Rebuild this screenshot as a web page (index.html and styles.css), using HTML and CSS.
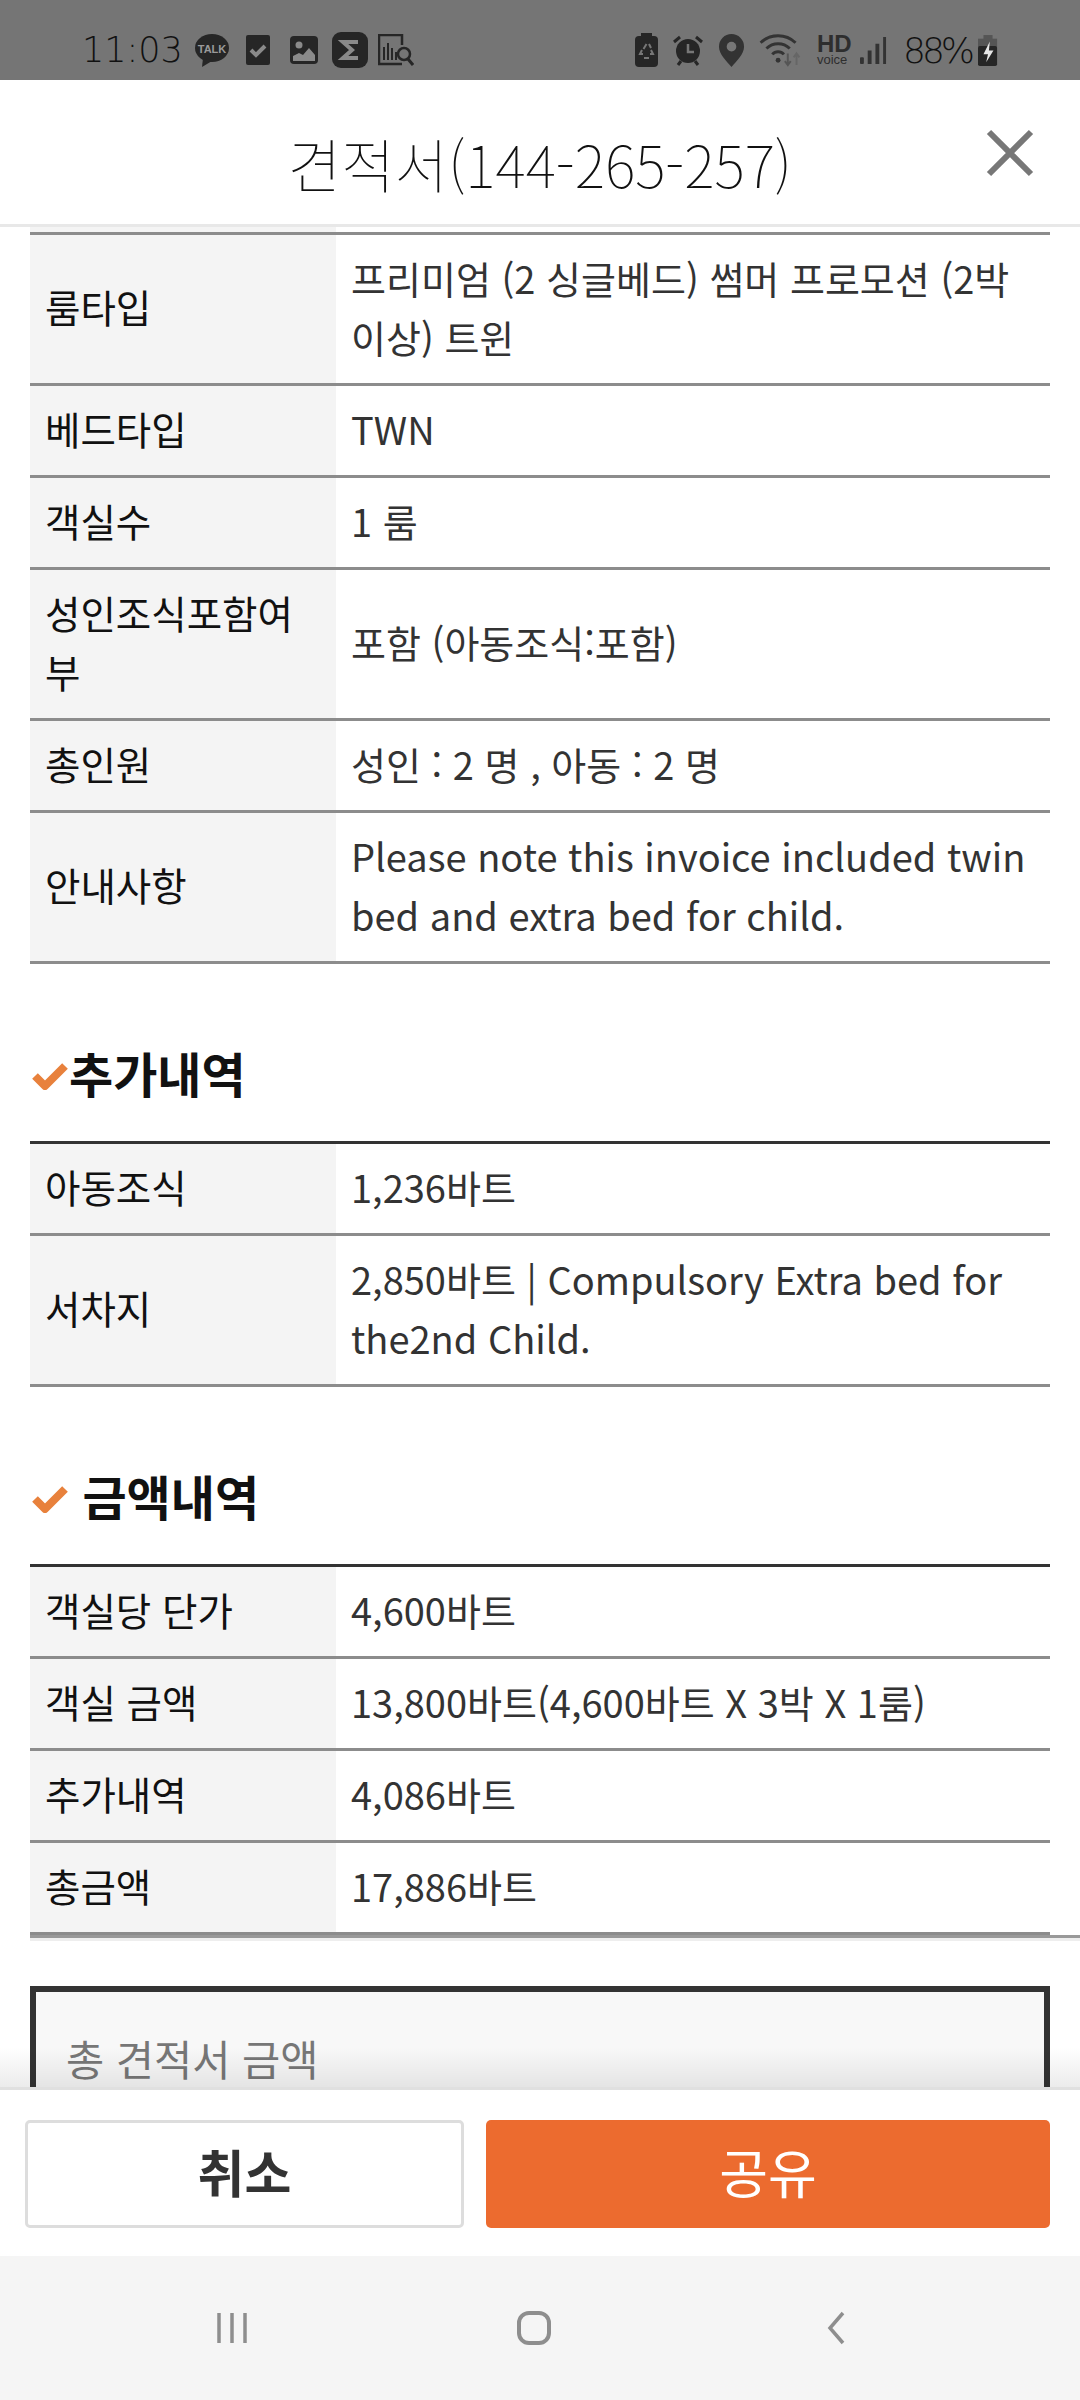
FILE: index.html
```html
<!DOCTYPE html>
<html lang="ko">
<head>
  <meta charset="UTF-8">
  <title>견적서</title>
  <link rel="stylesheet" href="styles.css">
</head>
<body>
  <div class="app">
    <!-- Status bar -->
    <div class="status-bar">
      <div class="status-left">
        <span class="clock">11:03</span>
        <svg width="34" height="33" viewBox="0 0 34 33"><ellipse cx="17" cy="14" rx="17" ry="14" fill="#262626"/><path d="M8 24l-1 9 10-6z" fill="#262626"/><text x="17" y="18.5" class="talk-text">TALK</text></svg>
        <svg width="24" height="30" viewBox="0 0 24 30"><rect width="24" height="30" rx="2" fill="#262626"/><path d="M5 15l5 5 9-9" fill="none" stroke="#8a8a8a" stroke-width="4"/></svg>
        <svg width="28" height="28" viewBox="0 0 28 28"><rect width="28" height="28" rx="4" fill="#262626"/><circle cx="9" cy="9" r="3.5" fill="#8a8a8a"/><path d="M3 25v-5l6-3 4 2 6-7 6 7v6z" fill="#8a8a8a"/></svg>
        <svg width="36" height="36" viewBox="0 0 36 36"><rect width="36" height="36" rx="9" fill="#262626"/><path d="M26 10H11l9 8-9 8h15" fill="none" stroke="#8a8a8a" stroke-width="4"/></svg>
        <svg width="36" height="32" viewBox="0 0 36 32"><path d="M24 11V1H1v29h23" fill="none" stroke="#262626" stroke-width="2.5"/><path d="M6 26V13M10 26V9M14 26V14M18 26V18" stroke="#262626" stroke-width="2"/><circle cx="26" cy="20" r="6" fill="none" stroke="#262626" stroke-width="2.5"/><path d="M30 25l5 6" stroke="#262626" stroke-width="3"/></svg>
      </div>
      <div class="status-right">
        <svg width="23" height="34" viewBox="0 0 23 34"><rect x="6" y="0" width="11" height="4" fill="#262626"/><rect y="3" width="23" height="31" rx="4" fill="#262626"/><path d="M11.5 11l-3 5M8 21H5l2-4M15 21h3l-2-4M9 25h5M14 11l2 4" fill="none" stroke="#777" stroke-width="2"/></svg>
        <svg width="32" height="32" viewBox="0 0 32 32"><circle cx="16" cy="17" r="12" fill="#262626"/><path d="M2 8l6-5M30 8l-6-5M6 31l3-4M26 31l-3-4" stroke="#262626" stroke-width="3"/><path d="M16 10v8h6" fill="none" stroke="#777" stroke-width="2.5"/></svg>
        <svg width="27" height="33" viewBox="0 0 28 34"><path d="M14 0a13 13 0 0 1 13 13c0 8-8 15-13 21C9 28 1 21 1 13A13 13 0 0 1 14 0z" fill="#333"/><circle cx="14" cy="13" r="5" fill="#777"/></svg>
        <svg width="44" height="33" viewBox="0 0 44 34"><path d="M1 9a26 26 0 0 1 36 0M7 15a17 17 0 0 1 24 0M13 21a8 8 0 0 1 12 0" fill="none" stroke="#333" stroke-width="3"/><circle cx="19" cy="27" r="2.5" fill="#333"/><path d="M29 20v12M26 28l3 4 3-4" fill="none" stroke="#555" stroke-width="2"/><path d="M38 32V20M35 24l3-4 3 4" fill="none" stroke="#666" stroke-width="2"/></svg>
        <span class="hd"><b>HD</b><i>voice</i></span>
        <svg width="27" height="29" viewBox="0 0 28 30"><rect y="22" width="4" height="7" rx="1" fill="#333"/><rect x="8" y="15" width="4" height="14" fill="#333"/><rect x="16" y="8" width="4" height="21" fill="#333"/><rect x="24" y="1" width="3" height="28" fill="#333"/></svg>
        <span class="battery-text">88%</span>
        <svg width="20" height="33" viewBox="0 0 22 34"><rect x="6" y="0" width="10" height="5" fill="#555"/><rect y="4" width="21" height="9" fill="#555"/><rect y="12" width="21" height="22" rx="2" fill="#262626"/><path d="M13 7l-7 14h5l-2 9 8-13h-5z" fill="#e6e6e6"/></svg>
      </div>
    </div>

    <!-- Header -->
    <header class="modal-header">
      <h1>견적서(144-265-257)</h1>
      <svg class="close-icon" width="48" height="48" viewBox="0 0 48 48"><path d="M3 3l42 42M45 3L3 45" stroke="#777" stroke-width="6"/></svg>
    </header>

    <!-- Scrolling content -->
    <main class="content">
      <table class="info-table clipped">
        <tr class="cut-row"><th></th><td></td></tr>
        <tr><th>룸타입</th><td>프리미엄 (2 싱글베드) 썸머 프로모션 (2박 이상) 트윈</td></tr>
        <tr><th>베드타입</th><td>TWN</td></tr>
        <tr><th>객실수</th><td>1 룸</td></tr>
        <tr><th>성인조식포함여부</th><td>포함 (아동조식:포함)</td></tr>
        <tr><th>총인원</th><td>성인 : 2 명 , 아동 : 2 명</td></tr>
        <tr><th>안내사항</th><td>Please note this invoice included twin bed and extra bed for child.</td></tr>
      </table>

      <h2 class="section-title"><svg class="check" width="36" height="28" viewBox="0 0 36 28"><path d="M3 14l10 10L33 4" fill="none" stroke="#e8813c" stroke-width="8" stroke-linejoin="round"/></svg>추가내역</h2>
      <table class="info-table">
        <tr><th>아동조식</th><td>1,236바트</td></tr>
        <tr><th>서차지</th><td>2,850바트 | Compulsory Extra bed for the2nd Child.</td></tr>
      </table>

      <h2 class="section-title"><svg class="check" width="36" height="28" viewBox="0 0 36 28"><path d="M3 14l10 10L33 4" fill="none" stroke="#e8813c" stroke-width="8" stroke-linejoin="round"/></svg>&nbsp;금액내역</h2>
      <table class="info-table">
        <tr><th>객실당 단가</th><td>4,600바트</td></tr>
        <tr><th>객실 금액</th><td>13,800바트(4,600바트 X 3박 X 1룸)</td></tr>
        <tr><th>추가내역</th><td>4,086바트</td></tr>
        <tr><th>총금액</th><td>17,886바트</td></tr>
      </table>
      <div class="table-end"></div>

      <div class="total-box">
        <p>총 견적서 금액</p>
      </div>
      <div class="fade"></div>
    </main>

    <!-- Buttons -->
    <footer class="actions">
      <button class="btn btn-cancel">취소</button>
      <button class="btn btn-share">공유</button>
    </footer>

    <!-- Android nav -->
    <nav class="nav-bar">
      <svg width="32" height="32" viewBox="0 0 32 32"><path d="M3 1v30M16 1v30M29 1v30" stroke="#8e8e8e" stroke-width="3.5"/></svg>
      <svg width="34" height="34" viewBox="0 0 34 34"><rect x="2" y="2" width="30" height="30" rx="10" fill="none" stroke="#8e8e8e" stroke-width="4"/></svg>
      <svg width="20" height="34" viewBox="0 0 20 34"><path d="M17 2L4 17l13 15" fill="none" stroke="#8e8e8e" stroke-width="3.5"/></svg>
    </nav>
  </div>
</body>
</html>
```

FILE: styles.css
```css
/* General */
* {
  box-sizing: border-box;
}

body {
  margin: 0;
  font-family: "Noto Sans CJK KR", "Noto Sans", sans-serif;
  background: #fff;
  color: #333;
}

.app {
  width: 1080px;
  height: 2400px;
  display: flex;
  flex-direction: column;
  overflow: hidden;
}

/* Status bar */
.status-bar {
  height: 80px;
  flex: none;
  background: #757575;
  display: flex;
  justify-content: space-between;
  align-items: center;
  padding: 20px 82px 0 82px;
  color: #111;
}

.status-left,
.status-right {
  display: flex;
  align-items: center;
}

.status-left {
  gap: 17px;
}

.status-right {
  gap: 14px;
}

.clock {
  font-family: "DejaVu Sans", sans-serif;
  font-size: 35px;
  font-weight: 200;
  width: 96px;
}

.status-left svg:nth-of-type(3) {
  margin-left: 3px;
}

.status-left svg:nth-of-type(4) {
  margin-left: -3px;
}

.status-left svg:nth-of-type(5) {
  margin-left: -7px;
}

.talk-text {
  font-family: "Liberation Sans", sans-serif;
  font-size: 11px;
  font-weight: 700;
  fill: #999;
  text-anchor: middle;
}

.hd {
  display: flex;
  flex-direction: column;
  font-family: "Liberation Sans", sans-serif;
  color: #2e2e2e;
  line-height: 1;
  width: 34px;
  margin-right: -5px;
}

.hd b {
  font-size: 24px;
  line-height: 20px;
}

.hd i {
  font-style: normal;
  font-size: 13px;
  line-height: 12px;
}

.battery-text {
  font-family: "DejaVu Sans", sans-serif;
  font-size: 36px;
  font-weight: 200;
  letter-spacing: -4px;
  margin: 0 -7px 0 2px;
}

/* Header */
.modal-header {
  height: 147px;
  flex: none;
  border-bottom: 3px solid #e8e8e8;
  position: relative;
  display: flex;
  justify-content: center;
  align-items: center;
}

.modal-header h1 {
  margin: 22px 0 0;
  font-size: 58px;
  font-weight: 100;
  color: #111;
}

.close-icon {
  position: absolute;
  right: 46px;
  top: 49px;
}

/* Content */
.content {
  flex: 1;
  min-height: 0;
  overflow: hidden;
  padding: 0 30px;
  position: relative;
}

.info-table {
  width: 1020px;
  border-collapse: collapse;
  table-layout: fixed;
  border-top: 3px solid #333;
  font-size: 38px;
  line-height: 59px;
}

.info-table.clipped {
  border-top: 0;
}

.info-table tr {
  border-bottom: 3px solid #8c8c8c;
}

.info-table th,
.info-table td {
  padding: 13px 15px 17px;
  text-align: left;
  font-weight: 400;
}

.info-table th {
  width: 306px;
  background: #f4f4f4;
  color: #111;
  font-size: 38.5px;
}

.info-table .cut-row th,
.info-table .cut-row td {
  padding: 0;
  height: 6px;
}

.section-title {
  display: flex;
  align-items: center;
  height: 60px;
  margin: 78px 0 39px;
  font-size: 48px;
  font-weight: 700;
  line-height: 60px;
  color: #111;
  white-space: pre;
}

.check {
  margin: 8px 1px 0 2px;
}

.table-end {
  height: 6px;
  margin: 0 -30px 0 0;
  background: #999;
  border-bottom: 3px solid #eee;
}

.total-box {
  margin-top: 45px;
  height: 200px;
  border: 6px solid #333;
  background: #f8f8f8;
  padding: 36px 30px;
}

.total-box p {
  margin: 0;
  font-size: 41.5px;
  color: #777;
}

.fade {
  position: absolute;
  left: 0;
  right: 0;
  bottom: 0;
  height: 40px;
  background: linear-gradient(rgba(0, 0, 0, 0), rgba(0, 0, 0, 0.08));
}

/* Buttons */
.actions {
  flex: none;
  height: 169px;
  border-top: 3px solid #e0e0e0;
  background: #fff;
  display: flex;
  gap: 22px;
  padding: 30px 30px 0 25px;
}

.btn {
  height: 108px;
  border-radius: 5px;
  font-family: inherit;
  font-size: 51px;
  padding-bottom: 8px;
}

.btn-cancel {
  width: 439px;
  background: #fff;
  border: 3px solid #ddd;
  color: #333;
  font-weight: 700;
}

.btn-share {
  flex: 1;
  background: #ec6b2f;
  border: 0;
  color: #fff;
  font-size: 53px;
  font-weight: 400;
}

/* Nav */
.nav-bar {
  flex: none;
  height: 144px;
  background: #f5f5f5;
  display: grid;
  grid-template-columns: repeat(3, 302px);
  justify-items: center;
  align-items: center;
  padding-left: 81px;
}
```
